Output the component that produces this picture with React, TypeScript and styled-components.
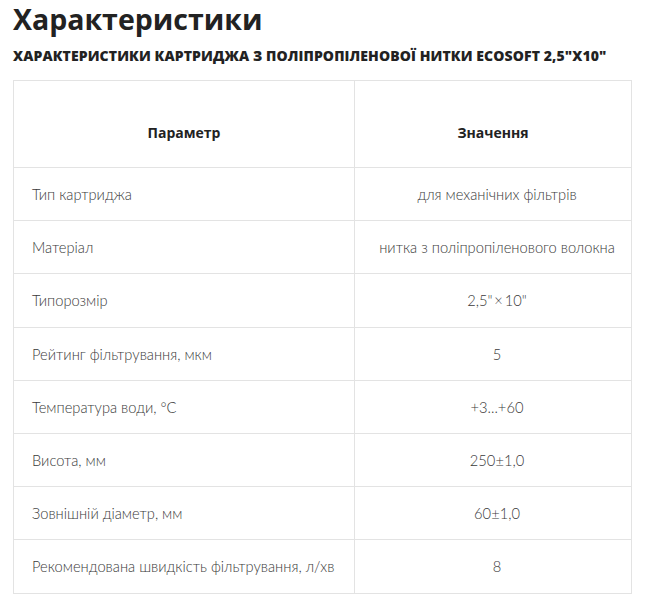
import styled, { createGlobalStyle } from "styled-components";

const GlobalStyle = createGlobalStyle`
  body {
    margin: 0;
    background: #fff;
    font-family: "Open Sans", "Noto Sans", sans-serif;
    color: #333;
  }
`;

const Page = styled.div`
  padding: 0 14px 0 13px;
`;

const Title = styled.h2`
  margin: 0;
  padding-top: 1px;
  font-size: 28.5px;
  line-height: 36px;
  font-weight: 700;
  color: #222;
`;

const Subtitle = styled.h3`
  margin: 9px 0 0;
  font-size: 14px;
  line-height: 20px;
  font-weight: 800;
  letter-spacing: 0.1px;
  text-transform: uppercase;
  color: #222;
`;

const Table = styled.table`
  margin-top: 14px;
  width: 100%;
  border-collapse: collapse;
  font-family: "Lato", "Noto Sans", sans-serif;
  font-size: 14.7px;
`;

const HeadCell = styled.th<{ $wide?: boolean }>`
  width: ${(p) => (p.$wide ? "340px" : "auto")};
  height: 69px;
  padding: 17px 0 0;
  border: 1px solid #e3e3e3;
  font-family: "Open Sans", "Noto Sans", sans-serif;
  font-size: 14px;
  font-weight: 700;
  color: #222;
  text-align: center;
`;

const Cell = styled.td<{ $center?: boolean }>`
  height: 52.2px;
  padding: 0 10px 0 18px;
  border: 1px solid #e3e3e3;
  font-weight: 300;
  color: #3a3a3a;
  white-space: nowrap;
  text-align: ${(p) => (p.$center ? "center" : "left")};
`;

const rows: [string, string][] = [
  ["Тип картриджа", "для механічних фільтрів"],
  ["Матеріал", "нитка з поліпропіленового волокна"],
  ["Типорозмір", "2,5\"\u2009×\u200910\""],
  ["Рейтинг фільтрування, мкм", "5"],
  ["Температура води, °С", "+3...+60"],
  ["Висота, мм", "250±1,0"],
  ["Зовнішній діаметр, мм", "60±1,0"],
  ["Рекомендована швидкість фільтрування, л/хв", "8"],
];

export default function App() {
  return (
    <Page>
      <GlobalStyle />
      <Title>Характеристики</Title>
      <Subtitle>Характеристики картриджа з поліпропіленової нитки Ecosoft 2,5"х10"</Subtitle>
      <Table>
        <thead>
          <tr>
            <HeadCell $wide>Параметр</HeadCell>
            <HeadCell>Значення</HeadCell>
          </tr>
        </thead>
        <tbody>
          {rows.map(([name, value]) => (
            <tr key={name}>
              <Cell>{name}</Cell>
              <Cell $center>{value}</Cell>
            </tr>
          ))}
        </tbody>
      </Table>
    </Page>
  );
}
